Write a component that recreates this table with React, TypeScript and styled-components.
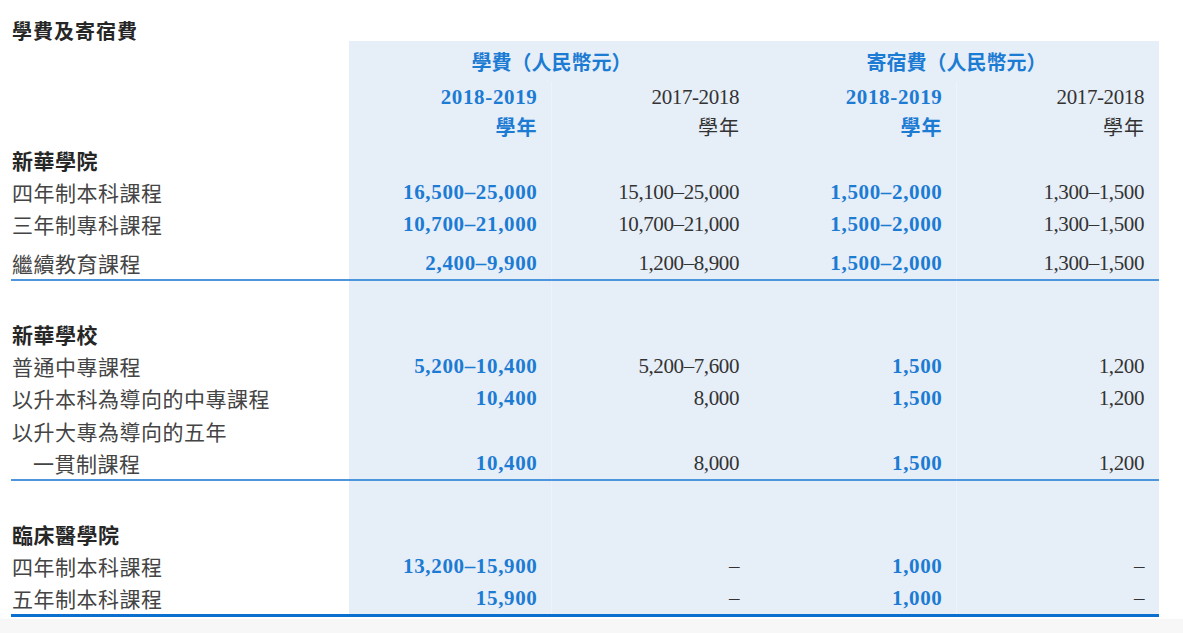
import React from 'react';
import styled, { createGlobalStyle } from 'styled-components';

const GlobalStyle = createGlobalStyle`
  html, body {
    margin: 0;
    padding: 0;
    background: #f7f7f7;
  }
  body {
    font-family: "Liberation Serif", "Noto Sans CJK TC", serif;
    color: #333;
  }
`;

const LABEL_W = 338;
const COL_W = 202.5;
const BLUE_BG = '#e6eef8';
const SEAM = '#eef3fa';
const ACCENT = '#1c7bd3';

const Page = styled.div`
  background: #fff;
  padding: 0 0 2px 11px;
`;

const Title = styled.div`
  height: 41px;
  box-sizing: border-box;
  padding: 20px 0 0 1px;
  font-family: "Noto Sans CJK TC", serif;
  font-size: 20px;
  font-weight: 700;
  line-height: 22px;
  letter-spacing: 1px;
  color: #262626;
`;

const Table = styled.div`
  width: ${LABEL_W + COL_W * 4}px;
`;

type RowProps = { $h: number; $gap?: number; $rule?: 'thin' | 'thick'; $seams?: boolean };

const seamLines = () => {
  const a = LABEL_W + COL_W;
  const b = LABEL_W + COL_W * 3;
  return `linear-gradient(to right, transparent ${a}px, ${SEAM} ${a}px, ${SEAM} ${a + 1}px, transparent ${
    a + 1
  }px, transparent ${b}px, ${SEAM} ${b}px, ${SEAM} ${b + 1}px, transparent ${b + 1}px),`;
};

const Row = styled.div<RowProps>`
  display: grid;
  grid-template-columns: ${LABEL_W}px repeat(4, ${COL_W}px);
  align-items: end;
  padding-top: ${(p) => p.$gap ?? 0}px;
  line-height: ${(p) => p.$h}px;
  background: ${(p) => (p.$seams ? seamLines() : '')}
    linear-gradient(to right, transparent ${LABEL_W}px, ${BLUE_BG} ${LABEL_W}px);
  border-bottom: ${(p) =>
    p.$rule === 'thick' ? '3px solid #0b6fcf' : p.$rule === 'thin' ? '2px solid #4d95dc' : 'none'};
`;

const GroupHead = styled.div`
  grid-column: span 2;
  text-align: center;
  padding-top: 4px;
  font-size: 20px;
  font-weight: 700;
  color: ${ACCENT};
`;

const Label = styled.div<{ $bold?: boolean; $indent?: boolean }>`
  padding-left: ${(p) => (p.$indent ? 22 : 1)}px;
  font-family: "Noto Sans CJK TC", serif;
  font-size: 21px;
  letter-spacing: 0.5px;
  font-weight: ${(p) => (p.$bold ? 700 : 400)};
  color: ${(p) => (p.$bold ? '#262626' : '#444')};
  white-space: nowrap;
`;

const Num = styled.div<{ $accent?: boolean }>`
  text-align: right;
  padding-right: ${(p) => (p.$accent ? 14 : 15)}px;
  font-size: 21px;
  font-weight: ${(p) => (p.$accent ? 700 : 400)};
  letter-spacing: ${(p) => (p.$accent ? '0.65px' : '-0.4px')};
  color: ${(p) => (p.$accent ? ACCENT : '#333')};
  white-space: nowrap;
`;

const Unit = styled(Num)`
  font-family: "Noto Sans CJK TC", serif;
  font-size: 20px;
  letter-spacing: 1px;
  padding-right: 14px;
`;

type Line = {
  label: string;
  bold?: boolean;
  indent?: boolean;
  gap?: number;
  rule?: 'thin' | 'thick';
  values?: string[];
};

const lines: Line[] = [
  { label: '新華學院', bold: true, gap: 2 },
  { label: '四年制本科課程', values: ['16,500–25,000', '15,100–25,000', '1,500–2,000', '1,300–1,500'] },
  { label: '三年制專科課程', values: ['10,700–21,000', '10,700–21,000', '1,500–2,000', '1,300–1,500'] },
  { label: '繼續教育課程', gap: 7, rule: 'thin', values: ['2,400–9,900', '1,200–8,900', '1,500–2,000', '1,300–1,500'] },
  { label: '新華學校', bold: true, gap: 37 },
  { label: '普通中專課程', values: ['5,200–10,400', '5,200–7,600', '1,500', '1,200'] },
  { label: '以升本科為導向的中專課程', values: ['10,400', '8,000', '1,500', '1,200'] },
  { label: '以升大專為導向的五年', gap: 1 },
  { label: '一貫制課程', indent: true, rule: 'thin', values: ['10,400', '8,000', '1,500', '1,200'] },
  { label: '臨床醫學院', bold: true, gap: 37 },
  { label: '四年制本科課程', values: ['13,200–15,900', '–', '1,000', '–'] },
  { label: '五年制本科課程', rule: 'thick', values: ['15,900', '–', '1,000', '–'] },
];

const years = ['2018-2019', '2017-2018', '2018-2019', '2017-2018'];

const App = () => {
  return (
    <Page>
      <GlobalStyle />
      <Title>學費及寄宿費</Title>
      <Table>
        <Row $h={37}>
          <div />
          <GroupHead>學費（人民幣元）</GroupHead>
          <GroupHead>寄宿費（人民幣元）</GroupHead>
        </Row>
        <Row $h={30} $seams>
          <div />
          {years.map((y, i) => (
            <Num key={i} $accent={i % 2 === 0}>
              {y}
            </Num>
          ))}
        </Row>
        <Row $h={30} $seams>
          <div />
          {years.map((_, i) => (
            <Unit key={i} $accent={i % 2 === 0}>
              學年
            </Unit>
          ))}
        </Row>
        {lines.map((line, i) => (
          <Row key={i} $h={32} $gap={line.gap} $rule={line.rule} $seams>
            <Label $bold={line.bold} $indent={line.indent}>
              {line.label}
            </Label>
            {(line.values ?? ['', '', '', '']).map((v, j) => (
              <Num key={j} $accent={j % 2 === 0}>
                {v}
              </Num>
            ))}
          </Row>
        ))}
      </Table>
    </Page>
  );
};

export default App;
